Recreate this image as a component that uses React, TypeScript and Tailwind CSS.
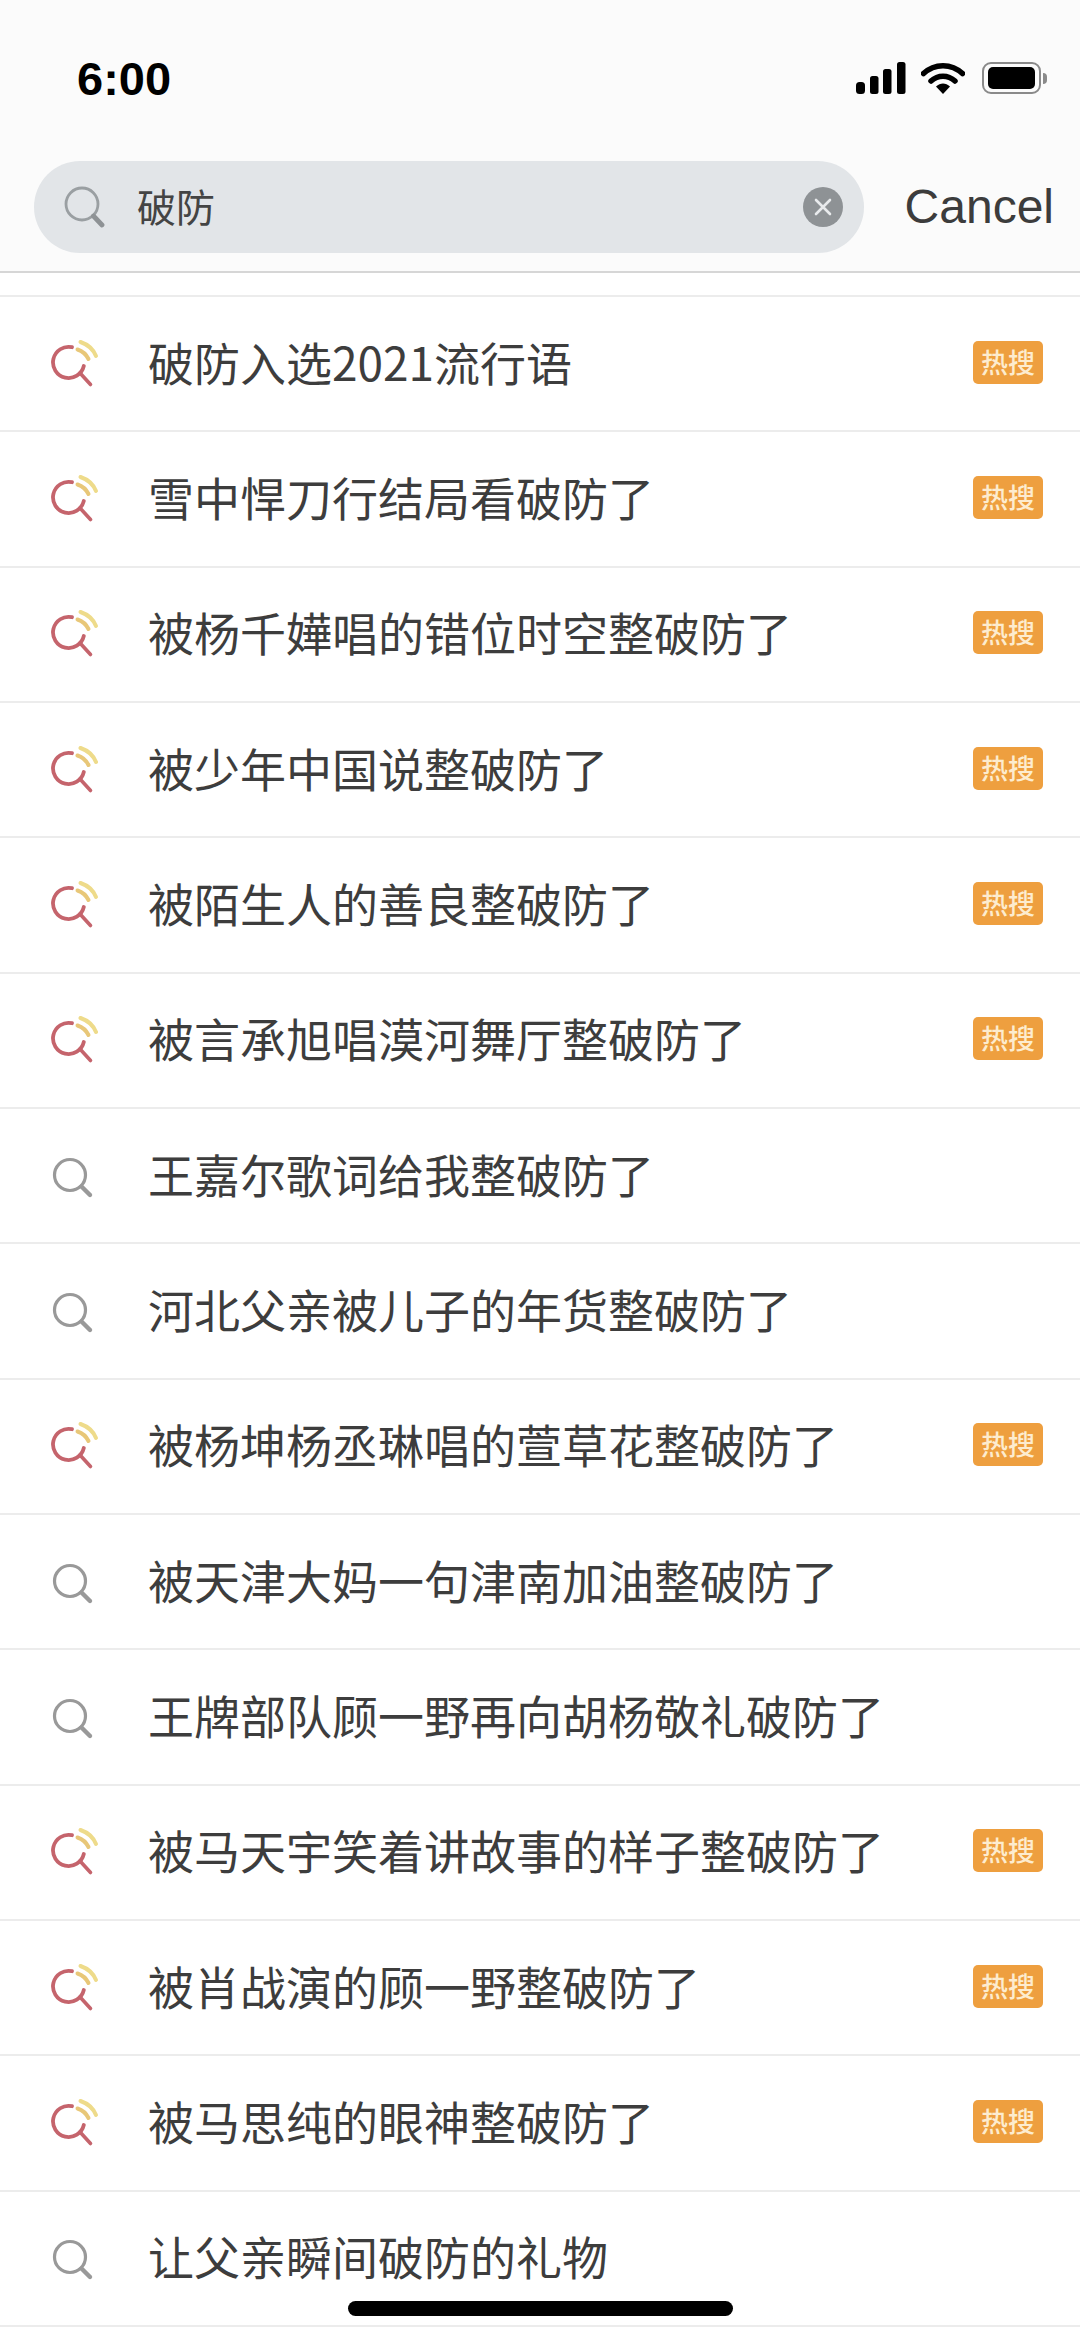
import React from 'react';

const items = [
  { text: '破防入选2021流行语', hot: true },
  { text: '雪中悍刀行结局看破防了', hot: true },
  { text: '被杨千嬅唱的错位时空整破防了', hot: true },
  { text: '被少年中国说整破防了', hot: true },
  { text: '被陌生人的善良整破防了', hot: true },
  { text: '被言承旭唱漠河舞厅整破防了', hot: true },
  { text: '王嘉尔歌词给我整破防了', hot: false },
  { text: '河北父亲被儿子的年货整破防了', hot: false },
  { text: '被杨坤杨丞琳唱的萱草花整破防了', hot: true },
  { text: '被天津大妈一句津南加油整破防了', hot: false },
  { text: '王牌部队顾一野再向胡杨敬礼破防了', hot: false },
  { text: '被马天宇笑着讲故事的样子整破防了', hot: true },
  { text: '被肖战演的顾一野整破防了', hot: true },
  { text: '被马思纯的眼神整破防了', hot: true },
  { text: '让父亲瞬间破防的礼物', hot: false },
];

const HotIcon = () => (
  <svg width="50" height="50" viewBox="0 0 50 50" fill="none" className="shrink-0">
    <path d="M22 8.2A15.6 15.6 0 1 0 33.8 27" stroke="#c5646c" strokeWidth="3.8" strokeLinecap="round" />
    <path d="M30 34L40.5 45.5" stroke="#c5646c" strokeWidth="3.6" strokeLinecap="round" />
    <path d="M30.5 3Q42 7 46 17" stroke="#eedb8a" strokeWidth="4" strokeLinecap="round" />
    <path d="M27.5 10.5Q35 13 38.5 20" stroke="#e8c778" strokeWidth="4" strokeLinecap="round" />
  </svg>
);

const PlainIcon = () => (
  <svg width="50" height="50" viewBox="0 0 50 50" fill="none" className="shrink-0">
    <circle cx="20" cy="24" r="15.5" stroke="#999999" strokeWidth="3.2" />
    <path d="M31.5 35.5L40 44" stroke="#999999" strokeWidth="4.4" strokeLinecap="round" />
  </svg>
);

const StatusIcons = () => (
  <div className="flex items-center">
    <svg width="50" height="32" viewBox="0 0 50 32" fill="#000000">
      <rect x="0" y="20" width="9" height="12" rx="3.5" />
      <rect x="14" y="14" width="8.5" height="18" rx="2.5" />
      <rect x="27" y="7" width="8.5" height="25" rx="2.5" />
      <rect x="41" y="0" width="8.5" height="32" rx="2.5" />
    </svg>
    <svg width="44" height="32" viewBox="0 0 44 32" fill="none" className="ml-[15px]">
      <path d="M2.5 11.5C13.5 1 30.5 1 41.5 11.5" stroke="#000000" strokeWidth="5.5" strokeLinecap="round" />
      <path d="M10 19C17 12.5 27 12.5 34 19" stroke="#000000" strokeWidth="5.5" strokeLinecap="round" />
      <path d="M15 24.5C19.5 20.5 24.5 20.5 29 24.5L22 32Z" fill="#000000" />
    </svg>
    <div className="ml-[17px] flex items-center">
      <div className="flex h-[32px] w-[59px] items-center justify-center rounded-[9px] border-[2px] border-[#8a8a8a]">
        <div className="h-[22px] w-[47px] rounded-[5px] bg-black" />
      </div>
      <div className="ml-[2px] h-[11px] w-[4px] rounded-r-full bg-[#8a8a8a]" />
    </div>
  </div>
);

export default function App() {
  return (
    <div className="relative h-[2339px] w-[1080px] overflow-hidden bg-white font-['Noto_Sans_CJK_SC','Noto_Sans',sans-serif]">
      <header className="h-[273px] border-b-2 border-[#d6d6d6] bg-[#fbfbfb]">
        <div className="flex h-[161px] items-start justify-between pl-[77px] pr-[33px] pt-[62px]">
          <span className="font-['Liberation_Sans',sans-serif] text-[47px] leading-[34px] font-bold text-black">6:00</span>
          <StatusIcons />
        </div>
        <div className="flex items-center pl-[34px] pr-[26px]">
          <div className="flex h-[92px] w-[830px] items-center rounded-full bg-[#e2e5e8] pl-[30px] pr-[21px]">
            <svg width="42" height="42" viewBox="0 0 42 42" fill="none" className="shrink-0">
              <circle cx="18" cy="18" r="16" stroke="#9a9fa2" strokeWidth="2.8" />
              <path d="M29.5 30L38 39" stroke="#8e9295" strokeWidth="4.8" strokeLinecap="round" />
            </svg>
            <span className="ml-[31px] pb-[3px] text-[39px] leading-none text-[#444444]">破防</span>
            <div className="ml-auto flex h-[40px] w-[40px] items-center justify-center rounded-full bg-[#8e9295]">
              <svg width="18" height="18" viewBox="0 0 18 18" fill="none">
                <path d="M2 2L16 16M16 2L2 16" stroke="#e8eaec" strokeWidth="2.6" strokeLinecap="round" />
              </svg>
            </div>
          </div>
          <span className="ml-auto font-['Liberation_Sans',sans-serif] text-[48px] leading-none text-[#3c3c3c]">Cancel</span>
        </div>
      </header>

      <ul className="mt-[22px] border-t-2 border-[#ececec]">
        {items.map((item) => (
          <li key={item.text} className="flex h-[135.33px] items-center border-b-2 border-[#ececec] pl-[50px] pr-[37px]">
            {item.hot ? <HotIcon /> : <PlainIcon />}
            <span className="ml-[48px] pb-[6px] text-[46px] leading-none text-[#3d3d3d]">{item.text}</span>
            {item.hot && (
              <span className="ml-auto mb-[3px] flex h-[43px] w-[70px] items-center justify-center rounded-[5px] bg-[#ee9f3f] pb-[2px] text-[27px] leading-none font-medium text-[#fdeccf]">
                热搜
              </span>
            )}
          </li>
        ))}
      </ul>

      <div className="absolute left-[348px] top-[2301px] h-[15px] w-[385px] rounded-full bg-black" />
    </div>
  );
}
